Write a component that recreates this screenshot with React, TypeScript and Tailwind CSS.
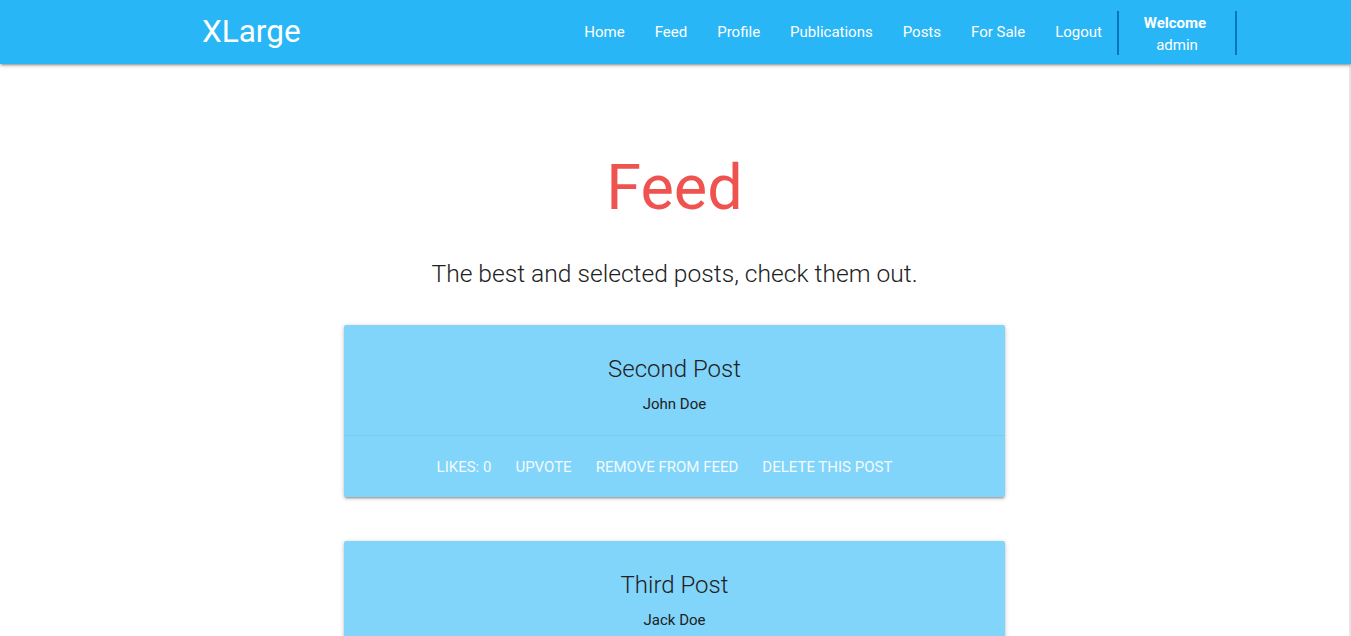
const links = ["Home", "Feed", "Profile", "Publications", "Posts", "For Sale", "Logout"];

const posts = [
  { title: "Second Post", author: "John Doe" },
  { title: "Third Post", author: "Jack Doe" },
];

function Card({ title, author }: { title: string; author: string }) {
  return (
    <div className="w-[661px] mx-auto mb-[44px] rounded-[2px] bg-[#81d4fa] shadow-[0_2px_2px_0_rgba(0,0,0,0.14),0_3px_1px_-2px_rgba(0,0,0,0.12),0_1px_5px_0_rgba(0,0,0,0.2)]">
      <div className="pt-7 pb-5 text-center">
        <div className="text-[24px] leading-8 font-light text-[#212121]">{title}</div>
        <p className="mt-2 text-[15px] leading-[22px] text-[#212121]">{author}</p>
      </div>
      <div className="border-t border-[rgba(120,160,190,0.2)] pt-[21px] pb-[19px] pr-5 flex justify-center gap-6 text-[15px] leading-[21px] uppercase text-white/90">
        <span>Likes: 0</span>
        <span>Upvote</span>
        <span>Remove from feed</span>
        <span>Delete this post</span>
      </div>
    </div>
  );
}

export default function App() {
  return (
    <div className="min-h-screen bg-white font-['Roboto',sans-serif]">
      <nav className="relative z-10 h-16 bg-[#29b6f6] text-white flex items-center pl-[202px] pr-[114px] shadow-[0_2px_2px_0_rgba(0,0,0,0.14),0_3px_1px_-2px_rgba(0,0,0,0.12),0_1px_5px_0_rgba(0,0,0,0.2)]">
        <a className="text-[31.5px] leading-16">XLarge</a>
        <div className="ml-auto flex items-center h-16">
          {links.map((l) => (
            <a key={l} className="px-[15px] text-[15px] leading-16">
              {l}
            </a>
          ))}
          <div className="w-[120px] h-[44px] mt-px border-x-2 border-[#0277bd] flex flex-col items-center pt-px text-[15px] leading-[22px]">
            <span className="font-bold -ml-1">Welcome</span>
            <span>admin</span>
          </div>
        </div>
      </nav>
      <div className="flex">
        <main className="flex-1 pb-10">
          <h1 className="mt-[89px] text-center text-[63px] leading-[70px] text-[#ef5350]">Feed</h1>
          <h5 className="mt-9 text-center text-[24.6px] leading-[30px] font-light text-[#212121]">
            The best and selected posts, check them out.
          </h5>
          <div className="mt-9">
            {posts.map((p) => (
              <Card key={p.title} {...p} />
            ))}
          </div>
        </main>
        <div className="w-[2px] bg-[#e6e6e6]" />
      </div>
    </div>
  );
}
